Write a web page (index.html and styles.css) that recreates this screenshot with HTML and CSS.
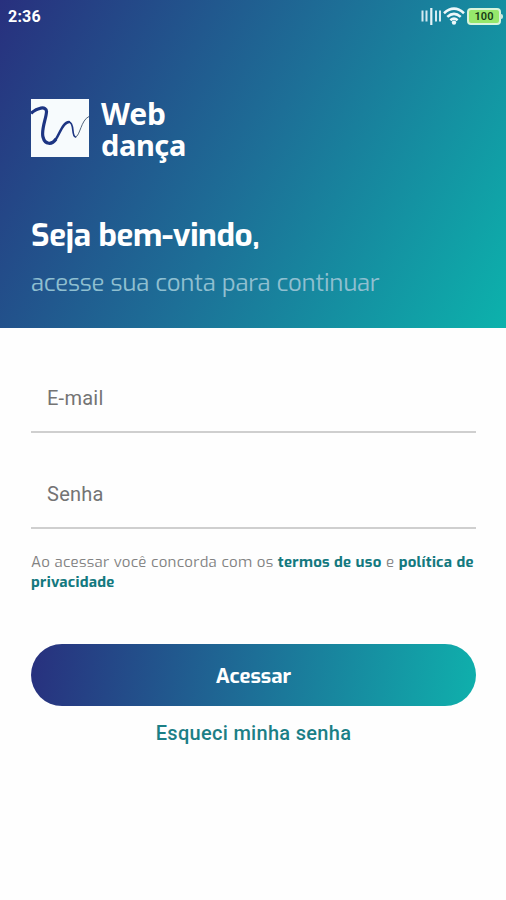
FILE: index.html
```html
<!DOCTYPE html>
<html lang="pt-BR">

<head>
	<meta charset="UTF-8">
	<meta name="viewport" content="width=device-width, initial-scale=1.0">
	<title>Web dança</title>
	<link rel="stylesheet" href="styles.css">
</head>

<body>
	<header class="hero">
		<div class="status-bar">
			<span class="time">2:36</span>
			<div class="status-icons">
				<svg class="icon-signal" width="21" height="18" viewBox="0 0 21 18">
					<path d="M1.5 3.5v11M5.5 3.5v11M15 3.5v11M19 3.5v11" stroke="#d5eaf1" stroke-width="2" fill="none" />
					<path d="M10.3 1v17" stroke="#e4f2f6" stroke-width="2.2" fill="none" />
				</svg>
				<svg class="icon-wifi" width="22" height="18" viewBox="0 0 22 18">
					<g stroke="#eef8fa" stroke-width="2.6" fill="none">
						<path d="M1 6.2Q11 -2.8 21 6.2" />
						<path d="M4.3 9.9Q11 3.9 17.7 9.9" />
						<path d="M7.4 13.2Q11 10 14.6 13.2" />
					</g>
					<circle cx="11" cy="15.6" r="2.2" fill="#eef8fa" />
				</svg>
				<div class="battery">100</div>
			</div>
		</div>

		<div class="logo">
			<svg class="logo-mark" width="58" height="58" viewBox="0 0 58 58">
				<rect width="58" height="58" fill="#f7fbfd" />
				<g fill="none" stroke="#1d3583" stroke-linejoin="round">
					<path d="M0 14.5C5 9 16 6 15.500 13C15 20 10 31 12 38C14 46 21 46 25 40" stroke-width="3.2" />
					<path d="M25 40C29 34 32 23 38 23" stroke-width="2.4" stroke-linecap="round" />
					<path d="M38 23C44 24 40 37 44.5 38" stroke-width="1.7" stroke-linecap="round" />
					<path d="M44.5 38C49 37 50 21 58 17.5" stroke="#52657c" stroke-width="1" />
				</g>
			</svg>
			<div class="logo-name">
				<span class="logo-web">Web</span>
				<span class="logo-danca">dança</span>
			</div>
		</div>

		<h1>Seja bem-vindo,</h1>
		<p class="subtitle">acesse sua conta para continuar</p>
	</header>

	<form class="login-form">
		<input class="field" type="email" placeholder="E-mail">
		<input class="field" type="password" placeholder="Senha">

		<p class="terms">Ao acessar você concorda com os <a href="#">termos de uso</a> e <a href="#">política de<br>privacidade</a></p>

		<button class="btn-login" type="button">Acessar</button>
		<a class="forgot" href="#">Esqueci minha senha</a>
	</form>
</body>

</html>
```
FILE: styles.css
```css
* {
	box-sizing: border-box;
}

body {
	margin: 0;
	min-height: 900px;
	background-color: #fefefe;
	font-family: Exo, 'Exo 2', 'Noto Sans', sans-serif;
}

.hero {
	height: 328px;
	padding: 0 32px 0 31px;
	background: linear-gradient(119deg, #28307e 0%, #1d6f97 50%, #0cb2ac 100%);
	color: white;
}

/* status bar */
.status-bar {
	display: flex;
	justify-content: space-between;
	align-items: center;
	height: 32px;
	margin: 0 -27px 0 -23px;
	font-family: Roboto, sans-serif;
}

.time {
	font-size: 16px;
	font-weight: 700;
	letter-spacing: 0.2px;
}

.status-icons {
	display: flex;
	align-items: center;
	gap: 2px;
}

.icon-signal {
	margin-right: -1px;
}

.battery {
	position: relative;
	width: 34px;
	height: 17px;
	border: 2px solid #d9f5dc;
	border-radius: 4px;
	background-color: #96e86c;
	color: #163a16;
	font-size: 11px;
	font-weight: 600;
	line-height: 13px;
	text-align: center;
}

.battery::after {
	content: '';
	position: absolute;
	top: 4px;
	right: -4px;
	width: 3px;
	height: 5px;
	border-radius: 0 2px 2px 0;
	background-color: #c9e9dd;
}

/* logo */
.logo {
	display: flex;
	gap: 12px;
	margin-top: 67px;
	height: 58px;
}

.logo-name {
	display: flex;
	flex-direction: column;
	margin-top: -1px;
	font-family: 'Noto Sans', sans-serif;
	font-size: 29px;
	font-weight: 700;
	line-height: 31px;
}

.logo-web {
	font-size: 30px;
	letter-spacing: -0.1px;
}

.logo-danca {
	letter-spacing: -0.4px;
}

h1 {
	margin: 57px 0 0;
	font-size: 31.5px;
	font-weight: 700;
	line-height: 42px;
	letter-spacing: -0.35px;
}

.subtitle {
	margin: 11px 0 0;
	color: #8fbfd0;
	font-size: 24px;
	line-height: 32px;
	letter-spacing: -0.25px;
	white-space: nowrap;
}

/* form */
.login-form {
	display: flex;
	flex-direction: column;
	padding: 36px 30px 0 31px;
}

.field {
	height: 69px;
	margin-bottom: 27px;
	padding: 0 16px;
	border: none;
	border-bottom: 2px solid #cfcfcf;
	background: transparent;
	font-family: Roboto, sans-serif;
	font-size: 20px;
	letter-spacing: 0.25px;
	outline: none;
}

.field::placeholder {
	color: #747474;
	opacity: 1;
}

.terms {
	margin: -4px 0 0;
	color: #828282;
	font-size: 15px;
	line-height: 20px;
	letter-spacing: 0.28px;
	white-space: nowrap;
}

.terms a {
	color: #14797f;
	font-weight: 700;
	text-decoration: none;
}

.btn-login {
	height: 62px;
	margin-top: 52px;
	padding-top: 3px;
	border: none;
	border-radius: 31px;
	background: linear-gradient(97.8deg, #28307e 0%, #1d6f97 50%, #0fb0ac 100%);
	color: white;
	font-family: inherit;
	font-size: 20.5px;
	font-weight: 700;
}

.forgot {
	align-self: center;
	margin-top: 14px;
	color: #1b7f86;
	font-family: Roboto, sans-serif;
	font-size: 20px;
	font-weight: 500;
	line-height: 26px;
	letter-spacing: 0.3px;
	text-decoration: none;
}
```
